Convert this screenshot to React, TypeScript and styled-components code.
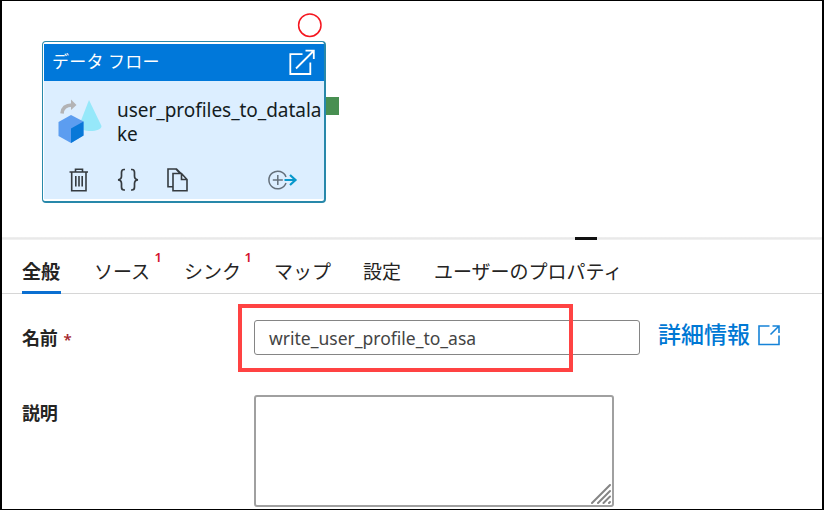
import React from "react";
import styled, { createGlobalStyle } from "styled-components";

const GlobalStyle = createGlobalStyle`
  * { box-sizing: border-box; }
  body { margin: 0; background: #fff; }
  svg { display: block; flex: none; }
`;

const jp = `"Noto Sans CJK JP", sans-serif`;
const latin = `"Noto Sans", "Noto Sans CJK JP", sans-serif`;

const Frame = styled.div`
  width: 824px;
  height: 510px;
  overflow: hidden;
  border: solid #000;
  border-width: 1px 2px;
  background: #fff;
  font-family: ${jp};
  color: #252423;
  display: flex;
  flex-direction: column;
`;

const Canvas = styled.section`
  height: 236px;
  flex: none;
  padding: 40px 0 0 40px;
`;

const Node = styled.article`
  position: relative;
  width: 284px;
  height: 162px;
  border: solid #2888aa;
  border-width: 1px 2px 2px 1px;
  border-radius: 4px;
  padding: 2px 0 2px 1px;
  background: #fff;
  display: flex;
  flex-direction: column;
`;

const Status = styled.svg`
  position: absolute;
  left: 254px;
  top: -30px;
`;

const Port = styled.span`
  position: absolute;
  left: 283px;
  top: 55px;
  width: 13px;
  height: 18px;
  background: #488f51;
`;

const NodeHeader = styled.header`
  height: 37px;
  flex: none;
  padding: 0 9px 0 8px;
  background: #0078da;
  color: #fff;
  display: flex;
  align-items: center;
  justify-content: space-between;
`;

const NodeType = styled.span`
  font-size: 17px;
  line-height: 34px;
  height: 37px;
  white-space: pre;
  letter-spacing: 0.3px;
`;

const NodeBody = styled.div`
  flex: 1;
  background: #dceeff;
  display: flex;
  flex-direction: column;
`;

const NodeTitle = styled.div`
  display: flex;
  height: 80px;
  padding: 17px 0 0 13px;
  gap: 15px;
`;

const NodeName = styled.div`
  font-family: ${latin};
  font-size: 19px;
  line-height: 24px;
  letter-spacing: -0.04px;
  color: #141c22;
  width: 208px;
  word-break: break-all;
`;

const Actions = styled.div`
  display: flex;
  align-items: center;
  height: 38px;
  padding-left: 25px;
`;

const Spacer = styled.span<{ $w: number }>`
  width: ${(p) => p.$w}px;
  flex: none;
`;

const Splitter = styled.div`
  height: 3px;
  flex: none;
  padding-left: 573px;
  background: linear-gradient(#f0f0f0, #e9e9e9 50%, #f4f4f4);
`;

const Grip = styled.div`
  width: 22px;
  height: 3px;
  background: #111;
`;

const Tabs = styled.nav`
  height: 54px;
  flex: none;
  display: flex;
  padding-left: 20px;
  border-bottom: 1px solid #d6d6d6;
`;

const Tab = styled.div<{ $w: number; $active?: boolean }>`
  position: relative;
  width: ${(p) => p.$w}px;
  height: 54px;
  flex: none;
  margin-right: 33px;
  border-bottom: 3px solid ${(p) => (p.$active ? "#0a6fd1" : "transparent")};
  font-size: 19px;
  line-height: 62px;
  white-space: nowrap;
  font-weight: ${(p) => (p.$active ? 700 : 400)};
`;

const Badge = styled.sup`
  position: absolute;
  right: -11px;
  top: 8px;
  font: 600 13px/18px "Noto Sans", sans-serif;
  color: #d4122d;
`;

const Form = styled.form`
  padding: 26px 0 0 20px;
  display: flex;
  flex-direction: column;
  gap: 39px;
`;

const Row = styled.div`
  display: flex;
  align-items: flex-start;
  height: 36px;
`;

const Label = styled.label`
  width: 232px;
  flex: none;
  font-size: 18px;
  font-weight: 700;
  line-height: 34px;
  letter-spacing: -0.2px;
`;

const Required = styled.span`
  margin-left: 6px;
  color: #a4262c;
  font: 600 15px/20px ${latin};
`;

const NameField = styled.div`
  position: relative;
  width: 386px;
  height: 35px;
  border: 1px solid #858585;
  border-radius: 3px;
  padding-left: 14px;
  font: 400 17.5px/34px ${latin};
  color: #444;
`;

const Highlight = styled.span`
  position: absolute;
  left: -17px;
  top: -17px;
  width: 335px;
  height: 68px;
  border: 4px solid #ff4343;
`;

const MoreLink = styled.a`
  margin-left: 18px;
  display: flex;
  align-items: flex-start;
  gap: 8px;
  color: #0078d4;
  font-size: 23px;
  font-weight: 500;
  line-height: 27px;
`;

const LinkIcon = styled.svg`
  margin-top: 5px;
`;

const DescriptionField = styled.div`
  width: 360px;
  height: 112px;
  flex: none;
  border: 2px solid #a0a0a0;
  border-radius: 3px;
  display: flex;
  align-items: flex-end;
  justify-content: flex-end;
  padding: 0 1px 1px 0;
`;

const OpenIcon = () => (
  <svg width="26" height="27" viewBox="0 0 26 27" fill="none" stroke="#fff" strokeWidth="1.8">
    <path d="M13.5 5.2H1.3V25h20V13.5M7 19.5 24 2.5M16.5 1.6h8.3V10" />
  </svg>
);

const DataFlowIcon = () => (
  <svg width="45" height="46" viewBox="0 0 45 46">
    <path d="M32 2 44.500 28c0 6-18 7-23 1Z" fill="#96e8fa" />
    <path d="M1.500 24 14 17 26.500 23.500V37.500L14 45 1.500 38Z" fill="#5c9df0" />
    <path d="M14 30.500 26.500 23.500V37.500L14 45Z" fill="#0878d8" />
    <path d="M5 15.500C5.500 9 9.500 7 15 7" fill="none" stroke="#b3b3b5" strokeWidth="3.600" />
    <path d="M14 1.500 19.500 7 14 12Z" fill="#b3b3b5" />
  </svg>
);

const TrashIcon = () => (
  <svg width="20" height="24" viewBox="0 0 20 24" fill="none" stroke="#353b40" strokeWidth="1.6">
    <path d="M.5 4h18.500M6.500 4V1.200h7V4M2.700 4v18.700h14.300V4M6.800 8v10.500M10 8v10.500M13.200 8v10.500" />
  </svg>
);

const BracesIcon = () => (
  <svg width="22" height="24" viewBox="0 0 22 24" fill="none" stroke="#353b40" strokeWidth="1.7">
    <path d="M8 1.500H7Q4.500 1.500 4.500 4.500V8Q4.500 11.500 1 11.800Q4.500 12 4.500 15.500V19Q4.500 22 7 22H8M14 1.500h1Q17.500 1.500 17.500 4.500V8Q17.500 11.500 21 11.800Q17.500 12 17.500 15.500V19Q17.500 22 15 22H14" />
  </svg>
);

const CopyIcon = () => (
  <svg width="21" height="24" viewBox="0 0 21 24" fill="none" stroke="#353b40" strokeWidth="1.6">
    <path d="M6 18.800H1V1h8.500L14 5.500M9 1l4 4.500" />
    <path d="M6 5.500h8.500l5.500 6v11.300H6ZM14.500 5.500v6H20" />
  </svg>
);

const AddOutputIcon = () => (
  <svg width="30" height="20" viewBox="0 0 30 20" fill="none" strokeWidth="1.5">
    <path d="M18 7A8.800 8.800 0 1 0 18 13M9.800 5v10M4.800 10h10" stroke="#65707b" />
    <path d="M16.500 10h11M22 5l5.500 5-5.500 5" stroke="#0798cc" strokeWidth="2.2" />
  </svg>
);

const App = () => (
  <>
    <GlobalStyle />
    <Frame>
      <Canvas>
        <Node>
          <Status width="26" height="26" viewBox="0 0 26 26">
            <circle cx="12.800" cy="13.200" r="11.200" fill="none" stroke="#f5161f" strokeWidth="1.500" />
          </Status>
          <Port />
          <NodeHeader>
            <NodeType>データ フロー</NodeType>
            <OpenIcon />
          </NodeHeader>
          <NodeBody>
            <NodeTitle>
              <DataFlowIcon />
              <NodeName>user_profiles_to_datalake</NodeName>
            </NodeTitle>
            <Actions>
              <TrashIcon />
              <Spacer $w={28} />
              <BracesIcon />
              <Spacer $w={28} />
              <CopyIcon />
              <Spacer $w={80} />
              <AddOutputIcon />
            </Actions>
          </NodeBody>
        </Node>
      </Canvas>
      <Splitter>
        <Grip />
      </Splitter>
      <Tabs>
        <Tab $w={39} $active>全般</Tab>
        <Tab $w={57}>ソース<Badge>1</Badge></Tab>
        <Tab $w={57}>シンク<Badge>1</Badge></Tab>
        <Tab $w={56}>マップ</Tab>
        <Tab $w={38}>設定</Tab>
        <Tab $w={190}>ユーザーのプロパティ</Tab>
      </Tabs>
      <Form>
        <Row>
          <Label>名前<Required>*</Required></Label>
          <NameField>
            write_user_profile_to_asa
            <Highlight />
          </NameField>
          <MoreLink>
            詳細情報
            <LinkIcon width="22" height="21" viewBox="0 0 22 21" fill="none" stroke="#1683d8" strokeWidth="1.600">
              <path d="M11.500 1H1v18.500h20v-9M12.500 9.500 20.500 1.500M14.500 1H21v7" />
            </LinkIcon>
          </MoreLink>
        </Row>
        <Row>
          <Label>説明</Label>
          <DescriptionField>
            <svg width="20" height="20" viewBox="0 0 20 20" stroke="#858585" strokeWidth="2" strokeLinecap="round">
              <path d="M1 19 19 1M7 19 19 7M12.500 19 19 12.500M18 19 19 18" />
            </svg>
          </DescriptionField>
        </Row>
      </Form>
    </Frame>
  </>
);

export default App;
